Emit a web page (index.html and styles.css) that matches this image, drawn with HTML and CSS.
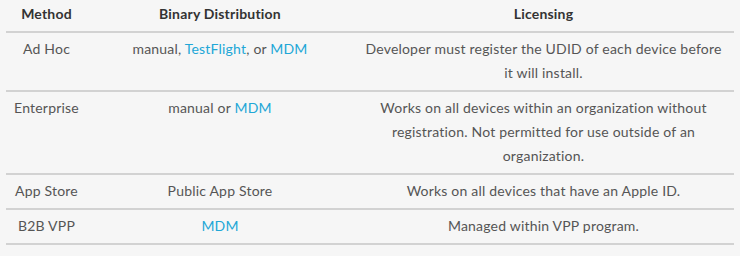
FILE: index.html
```html
<!DOCTYPE html>
<html lang="en">
<head>
    <meta charset="UTF-8">
    <meta name="viewport" content="width=device-width, initial-scale=1.0">
    <title>Distribution Methods</title>
    <link rel="stylesheet" href="styles.css">
</head>
<body>
    <table class="methods">
        <colgroup>
            <col class="col-method">
            <col class="col-binary">
            <col class="col-license">
        </colgroup>
        <thead>
            <tr>
                <th>Method</th>
                <th>Binary Distribution</th>
                <th>Licensing</th>
            </tr>
        </thead>
        <tbody>
            <tr>
                <td>Ad Hoc</td>
                <td>manual, <a href="#" class="link">TestFlight</a>, or <a href="#" class="link">MDM</a></td>
                <td>Developer must register the UDID of each device before it will install.</td>
            </tr>
            <tr>
                <td>Enterprise</td>
                <td>manual or <a href="#" class="link">MDM</a></td>
                <td>Works on all devices within an organization without registration. Not permitted for use outside of an organization.</td>
            </tr>
            <tr>
                <td>App Store</td>
                <td>Public App Store</td>
                <td>Works on all devices that have an Apple ID.</td>
            </tr>
            <tr>
                <td>B2B VPP</td>
                <td><a href="#" class="link">MDM</a></td>
                <td>Managed within VPP program.</td>
            </tr>
        </tbody>
    </table>
</body>
</html>
```

FILE: styles.css
```css
body {
    margin: 0;
    padding: 0;
    background-color: #f6f6f6;
    font-family: 'Lato', 'Open Sans', sans-serif;
    font-size: 14px;
    letter-spacing: 0.2px;
    color: #555;
}

.methods {
    margin-left: 6px;
    width: 728px;
    border-collapse: collapse;
    table-layout: fixed;
}

.col-method {
    width: 81px;
}

.col-binary {
    width: 266px;
}

.col-license {
    width: 381px;
}

.methods th,
.methods td {
    text-align: center;
    vertical-align: top;
    line-height: 24px;
    padding: 4px 10px 5px;
}

.methods th:first-child,
.methods td:first-child {
    padding-left: 4px;
    padding-right: 4px;
    white-space: nowrap;
}

.methods th {
    padding-top: 2px;
    font-weight: bold;
    color: #333;
}

.methods tr {
    border-bottom: 2px solid #d2d2d2;
}

.link {
    color: #22a7d6;
    text-decoration: none;
}
```
